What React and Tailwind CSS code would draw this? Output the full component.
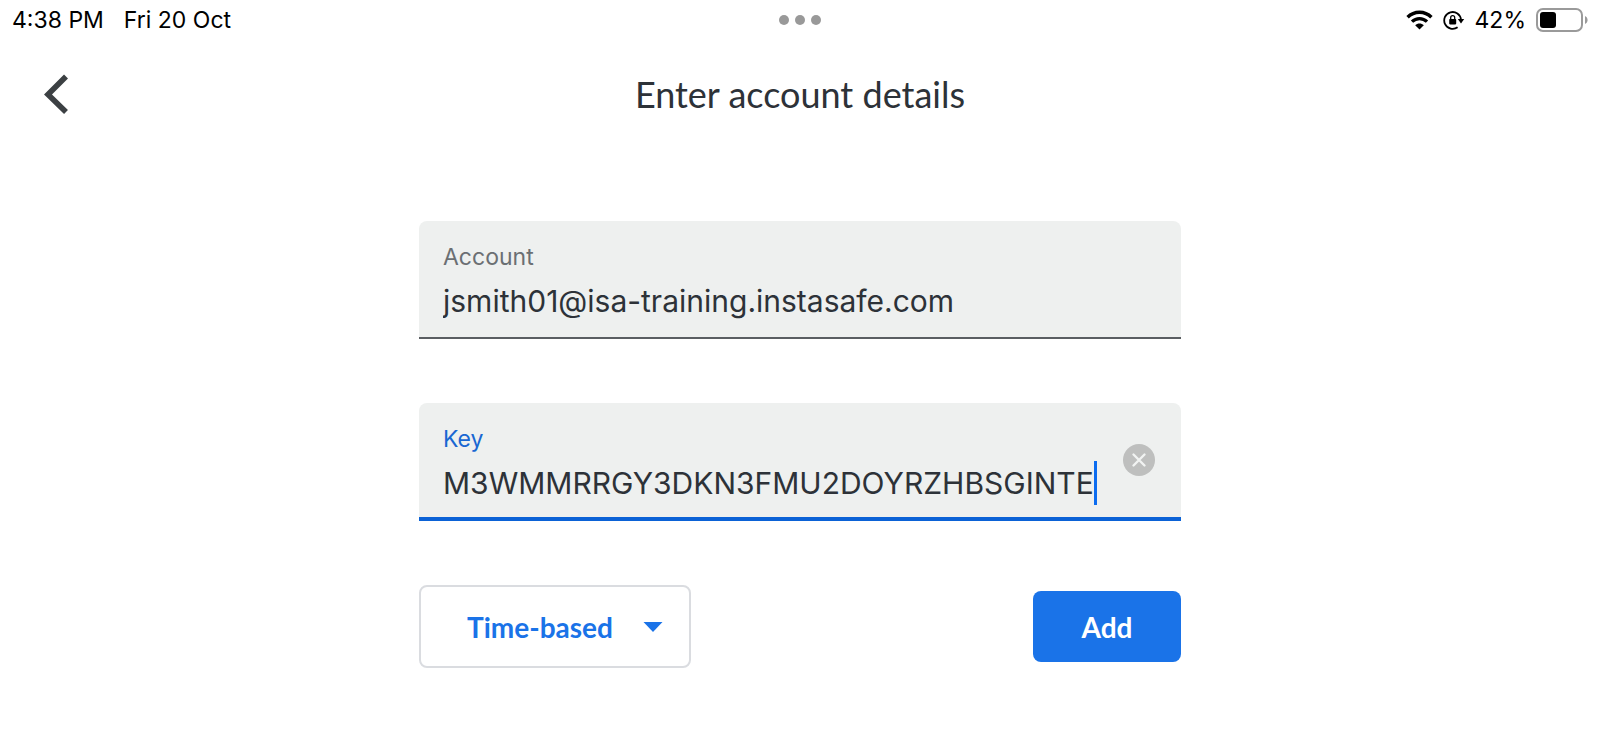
import { useEffect, useRef, useState } from "react";

const TYPES = ["Time-based", "Counter-based"];

function WifiIcon() {
  return (
    <svg className="w-[27px] h-5" viewBox="0 0 27 20" fill="none" aria-hidden="true">
      <path d="M1.6 7.2C8.2 .5 18.8 .5 25.4 7.2" stroke="#000" strokeWidth="3.4" />
      <path d="M6 11.6c4.2-4.1 10.8-4.1 15 0" stroke="#000" strokeWidth="3.3" />
      <path d="M9.2 15.2c2.4-2.3 6.2-2.3 8.6 0l-4.3 4.3z" fill="#000" />
    </svg>
  );
}

function RotationLockIcon() {
  return (
    <svg className="w-[22px] h-5" viewBox="0 0 22 20" fill="none" aria-hidden="true">
      <path d="M14.6 17.2A8.4 8.4 0 1 1 18 9.6" stroke="#000" strokeWidth="1.8" />
      <path d="M14.8 9h6.4l-3.2 4.4z" fill="#000" />
      <rect x="6.2" y="9" width="7" height="5.4" rx=".8" fill="#000" />
      <path d="M7.7 9.4V7.6a2 2 0 0 1 4 0v1.8" stroke="#000" strokeWidth="1.3" />
    </svg>
  );
}

function BatteryIcon() {
  return (
    <svg className="w-[52px] h-6" viewBox="0 0 52 24" fill="none" aria-hidden="true">
      <rect x="1" y="1" width="45" height="22" rx="6" stroke="#9a9a9a" strokeWidth="2" />
      <rect x="4" y="4" width="16" height="16" rx="3" fill="#000" />
      <path d="M49 8v8c1.500-.7 2.600-2.200 2.600-4S50.500 8.700 49 8z" fill="#9a9a9a" />
    </svg>
  );
}

function StatusBar() {
  return (
    <div className="grid grid-cols-3 items-center h-10 px-3 text-black text-[23px] leading-7">
      <div className="flex gap-5">
        <span>4:38 PM</span>
        <span>Fri 20 Oct</span>
      </div>
      <div className="flex justify-center gap-1.5">
        <span className="w-2.5 h-2.5 rounded-full bg-[#999999]" />
        <span className="w-2.5 h-2.5 rounded-full bg-[#999999]" />
        <span className="w-2.5 h-2.5 rounded-full bg-[#999999]" />
      </div>
      <div className="flex items-center justify-end gap-2.5">
        <WifiIcon />
        <RotationLockIcon />
        <span>42%</span>
        <BatteryIcon />
      </div>
    </div>
  );
}

export default function App() {
  const [account, setAccount] = useState("jsmith01@isa-training.instasafe.com");
  const [key, setKey] = useState("M3WMMRRGY3DKN3FMU2DOYRZHBSGINTE");
  const [type, setType] = useState(TYPES[0]);
  const keyRef = useRef(null);

  // keep the end of a long key in view
  useEffect(() => {
    keyRef.current.scrollLeft = keyRef.current.scrollWidth;
  }, [key]);

  return (
    <div className="min-h-screen bg-white text-[#2d3238] font-['Inter',sans-serif]">
      <StatusBar />

      <header className="grid grid-cols-[1fr_auto_1fr] items-center h-[108px] px-10">
        <button type="button" aria-label="Back" className="w-8 h-10">
          <svg className="w-8 h-10" viewBox="0 0 32 40" fill="none" aria-hidden="true">
            <path d="M26 2.500 8 20.500 26 38" stroke="#3c4043" strokeWidth="5.600" />
          </svg>
        </button>
        <h1 className="text-[36px] leading-10 font-['Lato',sans-serif]">Enter account details</h1>
      </header>

      <form className="max-w-[762px] mx-auto pt-[73px]" onSubmit={(e) => e.preventDefault()}>
        <div className="flex flex-col h-[118px] pt-5 px-6 rounded-t-lg bg-[#eef0ef] border-b-2 border-[#5a5e62]">
          <label htmlFor="account" className="text-[23px] leading-8 text-[#6b6f73]">Account</label>
          <input
            id="account"
            className="w-full h-14 bg-transparent outline-none text-[30px]"
            value={account}
            onChange={(e) => setAccount(e.target.value)}
          />
        </div>

        <div className="flex items-center h-[118px] mt-16 pl-6 pr-[26px] rounded-t-lg bg-[#eef0ef] border-b-4 border-[#0b62d6]">
          <div className="flex flex-col flex-1 min-w-0 h-full pt-5">
            <label htmlFor="key" className="text-[23px] leading-8 text-[#1967d2]">Key</label>
            <div className="flex items-center">
              <input
                id="key"
                ref={keyRef}
                className="flex-1 min-w-0 h-14 bg-transparent outline-none text-[30px]"
                value={key}
                onChange={(e) => setKey(e.target.value)}
              />
              <span className="w-[3px] h-11 bg-[#0b6cf0]" />
            </div>
          </div>
          <button type="button" aria-label="Clear key" className="ml-[26px]" onClick={() => setKey("")}>
            <svg className="w-8 h-8" viewBox="0 0 32 32" aria-hidden="true">
              <circle cx="16" cy="16" r="16" fill="#bebfbe" />
              <path d="m10.500 10.500 11 11m0-11-11 11" stroke="#f1f3f2" strokeWidth="2.400" strokeLinecap="round" />
            </svg>
          </button>
        </div>

        <div className="flex items-center justify-between mt-16">
          <div className="relative">
            <select
              aria-label="Type of key"
              className="appearance-none w-[272px] h-[83px] pl-[46px] rounded-lg border-2 border-[#dadce0] bg-white text-[#1a73e8] text-[28px] font-bold font-['Lato',sans-serif]"
              value={type}
              onChange={(e) => setType(e.target.value)}
            >
              {TYPES.map((t) => (
                <option key={t}>{t}</option>
              ))}
            </select>
            <svg className="absolute right-7 top-1/2 -translate-y-1/2 w-5 h-2.5 pointer-events-none" viewBox="0 0 20 10" aria-hidden="true">
              <path d="M.5 0h19L10 10z" fill="#1a73e8" />
            </svg>
          </div>
          <button
            type="submit"
            className="w-[148px] h-[71px] rounded-lg bg-[#1a73e8] text-white text-[28px] font-bold font-['Lato',sans-serif]"
          >
            Add
          </button>
        </div>
      </form>
    </div>
  );
}
